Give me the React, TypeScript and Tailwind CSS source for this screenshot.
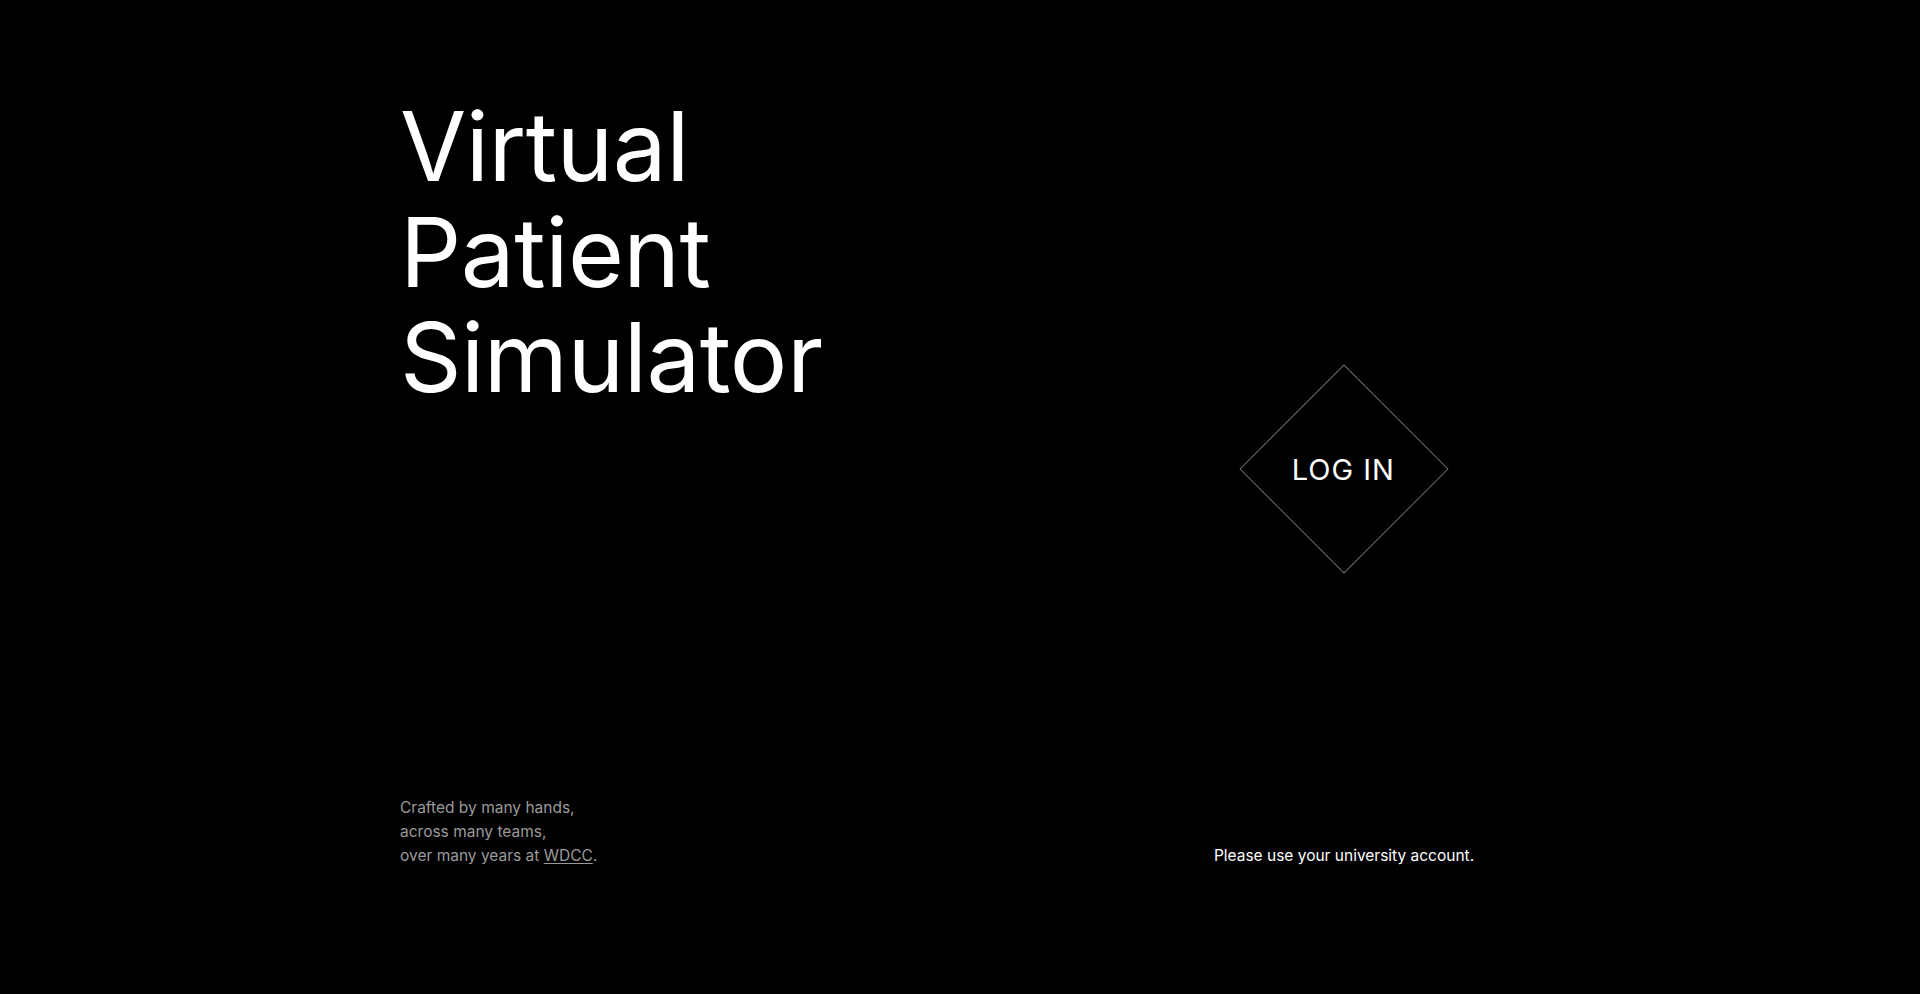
import React from "react";

export default function App() {
  return (
    <main className="h-screen w-full bg-black flex px-[400px] font-['Inter','Liberation_Sans',sans-serif] overflow-hidden">
      {/* Left: title + credits */}
      <section className="flex flex-col pt-[94px] pb-[126px]">
        <h1 className="text-white text-[96px] leading-[105.5px] font-normal tracking-[-0.5px]">
          Virtual
          <br />
          Patient
          <br />
          Simulator
        </h1>
        <p className="mt-auto text-[15.5px] leading-[24px] text-[#9a9a9a]">
          Crafted by many hands,
          <br />
          across many teams,
          <br />
          over many years at{" "}
          <a href="#" className="underline underline-offset-2">
            WDCC
          </a>
          .
        </p>
      </section>

      {/* Right: login diamond + hint */}
      <section className="ml-auto w-[352px] flex flex-col items-center pt-[395px] pb-[126px]">
        <button className="w-[148px] h-[148px] rotate-45 border border-[#6b6b6b] flex items-center justify-center bg-black">
          <span className="-rotate-45 text-white text-[29px] leading-none tracking-[1px] whitespace-nowrap">LOG IN</span>
        </button>
        <p className="mt-auto text-white text-[15.5px] leading-[24px]">
          Please use your university account.
        </p>
      </section>
    </main>
  );
}
